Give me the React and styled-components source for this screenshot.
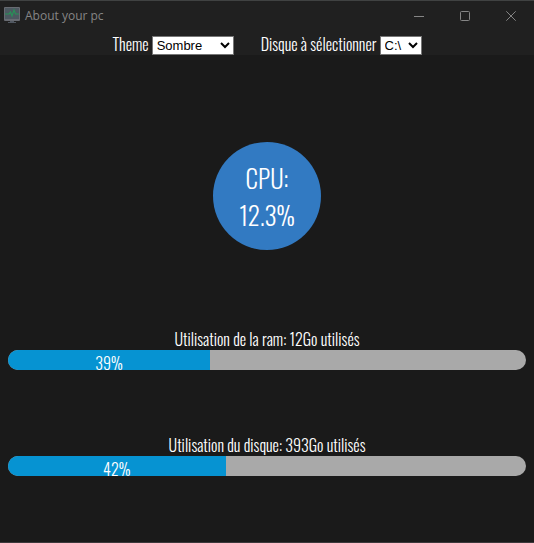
import React, { useState } from "react";
import styled, { createGlobalStyle } from "styled-components";

const GlobalStyle = createGlobalStyle`
  *, *::before, *::after { box-sizing: border-box; }
  body {
    margin: 0;
    background: #1a1a1a;
    color: #fff;
    font-family: Oswald, "Liberation Sans Narrow", "Roboto Condensed", "Liberation Sans", sans-serif;
    font-size: 16px;
    font-weight: 300;
  }
`;

const Window = styled.div`
  display: flex;
  flex-direction: column;
  min-height: 100vh;
  border-top: 1px solid #404242;
  border-bottom: 1px solid #3c393b;
`;

const TitleBar = styled.header`
  display: flex;
  align-items: center;
  height: 31px;
  padding: 0 0 2px 4px;
  background: #202020;
`;

const AppTitle = styled.h1`
  flex: 1;
  margin: 0 0 0 5px;
  color: #858585;
  font: 400 12px/16px "Segoe UI", "Open Sans", "Noto Sans", sans-serif;
`;

const WindowButton = styled.button`
  display: flex;
  align-items: center;
  justify-content: center;
  width: 46px;
  height: 28px;
  padding: 0;
  border: 0;
  background: transparent;
  color: #858585;
`;

const Toolbar = styled.div`
  display: flex;
  justify-content: center;
  gap: 27px;
  height: 23px;
  background: #202020;
`;

const Field = styled.label`
  display: flex;
  align-items: center;
  gap: 3px;
  line-height: 24px;
  white-space: nowrap;
`;

const Select = styled.select`
  width: ${({ $width }) => $width}px;
  height: 19px;
  margin-top: 4px;
  padding: 0;
  border: 1px solid #767676;
  border-radius: 0;
  background: #fff;
  color: #000;
  font: 400 13px "Liberation Sans", Arial, sans-serif;
`;

const Content = styled.main`
  display: flex;
  flex-direction: column;
  padding: 87px 8px 0;
`;

const CpuGauge = styled.section`
  display: flex;
  flex-direction: column;
  align-items: center;
  justify-content: center;
  align-self: center;
  width: 108px;
  height: 108px;
  margin-bottom: 79px;
  border-radius: 50%;
  background: #327ac2;
  font-size: 25px;
  line-height: 37px;
`;

const UsageList = styled.div`
  display: flex;
  flex-direction: column;
  gap: 65px;
`;

const Usage = styled.section`
  text-align: center;
`;

const UsageLabel = styled.div`
  line-height: 21px;
`;

const Track = styled.div`
  height: 20px;
  border-radius: 10px;
  background: #a9a9a9;
`;

const Fill = styled.div`
  height: 100%;
  border-radius: 10px 0 0 10px;
  background: #0693d2;
  line-height: 26px;
`;

function MonitorIcon() {
  return (
    <svg width="16" height="17" viewBox="0 0 16 17" aria-hidden="true">
      <rect width="16" height="14" rx="1" fill="#686b72" />
      <rect x="1" y="1" width="14" height="11" fill="#4d5961" />
      <path d="M1 7h4l1.5-2L8 9l2-6 1.5 4H15" fill="none" stroke="#289158" strokeWidth="1.2" />
      <path d="M6 14h4v1h2v1H4v-1h2z" fill="#515861" />
    </svg>
  );
}

const windowActions = [
  { name: "Réduire", path: "M0 5.5h10" },
  { name: "Agrandir", path: "M1.5 .5h7a1 1 0 0 1 1 1v7a1 1 0 0 1-1 1h-7a1 1 0 0 1-1-1v-7a1 1 0 0 1 1-1z" },
  { name: "Fermer", path: "M.3 .3l9.4 9.4M9.7 .3L.3 9.7" },
];

function UsageBar({ label, value }) {
  return (
    <Usage>
      <UsageLabel>{label}</UsageLabel>
      <Track role="progressbar" aria-label={label} aria-valuenow={value} aria-valuemin={0} aria-valuemax={100}>
        <Fill style={{ width: `${value}%` }}>{value}%</Fill>
      </Track>
    </Usage>
  );
}

export default function App() {
  const [theme, setTheme] = useState("Sombre");
  const [disk, setDisk] = useState("C:\\");
  return (
    <>
      <GlobalStyle />
      <Window>
        <TitleBar>
          <MonitorIcon />
          <AppTitle>About your pc</AppTitle>
          {windowActions.map(({ name, path }) => (
            <WindowButton key={name} type="button" aria-label={name}>
              <svg width="10" height="10" viewBox="0 0 10 10" fill="none" stroke="currentColor" aria-hidden="true">
                <path d={path} />
              </svg>
            </WindowButton>
          ))}
        </TitleBar>
        <Toolbar>
          <Field htmlFor="theme">
            Theme
            <Select id="theme" $width={82} value={theme} onChange={(e) => setTheme(e.target.value)}>
              <option>Sombre</option>
              <option>Clair</option>
            </Select>
          </Field>
          <Field htmlFor="disk">
            Disque à sélectionner
            <Select id="disk" $width={42} value={disk} onChange={(e) => setDisk(e.target.value)}>
              <option>{"C:\\"}</option>
            </Select>
          </Field>
        </Toolbar>
        <Content>
          <CpuGauge>
            <span>CPU:</span>
            <span>12.3%</span>
          </CpuGauge>
          <UsageList>
            <UsageBar label="Utilisation de la ram: 12Go utilisés" value={39} />
            <UsageBar label="Utilisation du disque: 393Go utilisés" value={42} />
          </UsageList>
        </Content>
      </Window>
    </>
  );
}
